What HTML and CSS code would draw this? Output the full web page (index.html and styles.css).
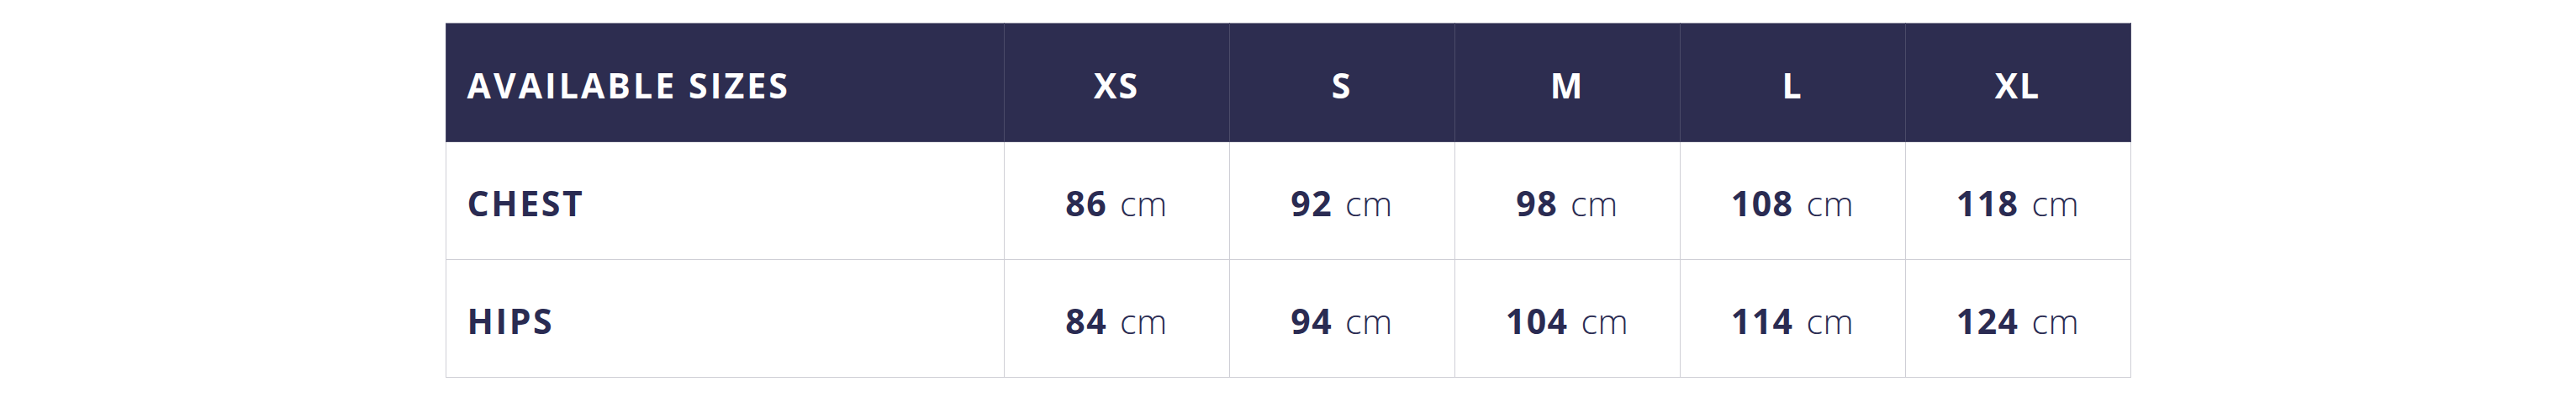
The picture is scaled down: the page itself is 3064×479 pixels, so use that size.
FILE: index.html
```html
<!DOCTYPE html>
<html lang="en">
<head>
<meta charset="utf-8">
<title>Size chart</title>
<link rel="stylesheet" href="styles.css">
</head>
<body>
<div class="page">
  <table class="sizes">
    <colgroup>
      <col class="col-label">
      <col class="col-size">
      <col class="col-size">
      <col class="col-size">
      <col class="col-size">
      <col class="col-size">
    </colgroup>
    <thead>
      <tr>
        <th class="label">AVAILABLE SIZES</th>
        <th>XS</th>
        <th>S</th>
        <th>M</th>
        <th>L</th>
        <th>XL</th>
      </tr>
    </thead>
    <tbody>
      <tr>
        <td class="label">CHEST</td>
        <td><b>86</b><span class="unit">cm</span></td>
        <td><b>92</b><span class="unit">cm</span></td>
        <td><b>98</b><span class="unit">cm</span></td>
        <td><b>108</b><span class="unit">cm</span></td>
        <td><b>118</b><span class="unit">cm</span></td>
      </tr>
      <tr>
        <td class="label">HIPS</td>
        <td><b>84</b><span class="unit">cm</span></td>
        <td><b>94</b><span class="unit">cm</span></td>
        <td><b>104</b><span class="unit">cm</span></td>
        <td><b>114</b><span class="unit">cm</span></td>
        <td><b>124</b><span class="unit">cm</span></td>
      </tr>
    </tbody>
  </table>
</div>
</body>
</html>
```

FILE: styles.css
```css
html, body {
  margin: 0;
  padding: 0;
  background: #ffffff;
}

.page {
  padding-top: 27px;
  display: flex;
  justify-content: center;
}

.sizes {
  width: 2005px;
  border-collapse: collapse;
  table-layout: fixed;
  font-family: "Open Sans", "Liberation Sans", sans-serif;
  font-size: 41px;
  color: #2a2b52;
}

.col-label {
  width: 664px;
}

.col-size {
  width: 268px;
}

.sizes th,
.sizes td {
  padding: 6px 0 0;
  text-align: center;
  vertical-align: middle;
  line-height: 1;
  box-sizing: border-box;
}

.sizes th {
  background: #2d2d50;
  color: #ffffff;
  font-weight: 700;
  height: 141px;
  letter-spacing: 2px;
  border: 1px solid #4a4a68;
  border-top-color: #8c8ca0;
}

.sizes td {
  height: 140px;
  border: 1px solid #cfcfd6;
}

.sizes .label {
  text-align: left;
  padding-left: 25px;
  font-weight: 700;
  letter-spacing: 2.6px;
}

.sizes th.label {
  letter-spacing: 3.1px;
}

.sizes td b {
  font-weight: 700;
  letter-spacing: 1.5px;
}

.sizes .unit {
  font-weight: 300;
  margin-left: 15px;
  letter-spacing: 0.5px;
}
```
